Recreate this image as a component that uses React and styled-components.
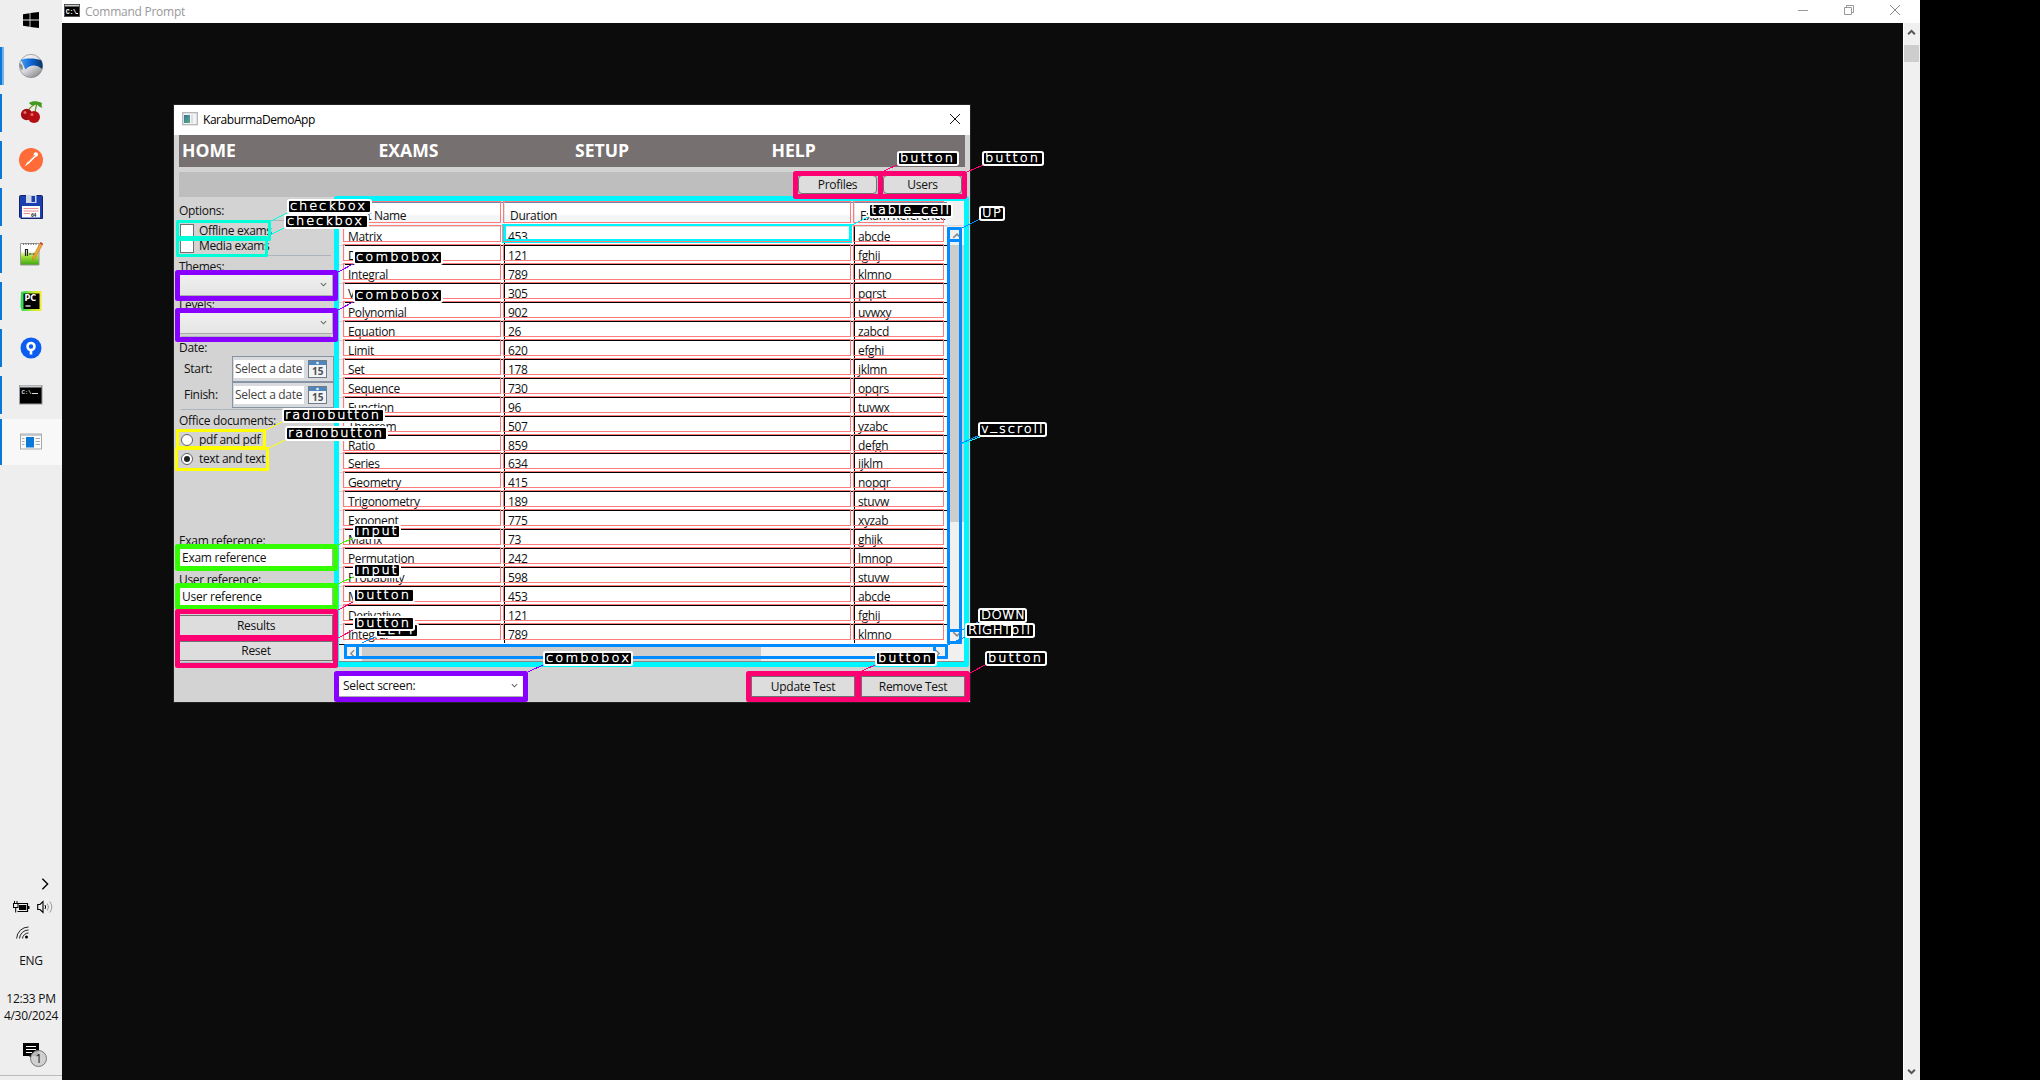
import React from "react";
import styled, { createGlobalStyle, css } from "styled-components";

const Global = createGlobalStyle`
  * { box-sizing: border-box; }
  html, body { margin: 0; background: #000; }
  body { width: 2040px; height: 1080px; overflow: hidden; font-family: "Open Sans", "Noto Sans", sans-serif; font-size: 12px; line-height: 16px; color: #111; letter-spacing: -0.3px; }
`;

const Desktop = styled.div`display: flex; position: relative; width: 1920px; height: 1080px; background: #0c0c0c;`;

/* ---------- taskbar ---------- */
const Taskbar = styled.aside`display: flex; flex-direction: column; width: 62px; height: 1080px; background: #eee; color: #111;`;
const Slots = styled.div`display: flex; flex-direction: column; gap: 9px;`;
const Slot = styled.div`
  display: flex; align-items: center; justify-content: center; height: 38px;
  ${(p) => p.$first && css`padding-top: 2px;`}
  ${(p) => p.$open && css`box-shadow: inset 2px 0 #0a78d7;`}
  ${(p) => p.$grouped && css`box-shadow: inset 2px 0 #0a78d7, inset 4px 0 #76b2e6;`}
  ${(p) => p.$active && css`margin-top: -4px; height: 46px; background: #f8f8f8; padding-bottom: 2px;`}
`;
const Tray = styled.div`display: flex; flex-direction: column; margin-top: auto; height: 205px;`;
const TrayRow = styled.div`display: flex; align-items: center; height: ${(p) => p.$h}px; padding-left: ${(p) => p.$x || 0}px; gap: ${(p) => p.$gap || 0}px;`;
const Language = styled.div`height: 49px; padding-top: 10px; text-align: center; line-height: 17px;`;
const Clock = styled.div`height: 50px; text-align: center; line-height: 17px;`;
const Bell = styled.div`padding: 3px 0 0 23px; height: 36px;`;
const TrayEdge = styled.div`height: 5px; border-top: 1px solid #bbb;`;

/* ---------- console ---------- */
const Console = styled.main`display: flex; flex-direction: column; width: 1858px;`;
const ConsoleBar = styled.header`display: flex; align-items: center; height: 23px; padding: 0 20px 3px 2px; background: #fff; color: #999;`;
const ConsoleTitle = styled.span`margin: 3px auto 0 5px; letter-spacing: -0.25px;`;
const Controls = styled.span`display: flex; gap: 36px; align-items: center;`;
const ConsoleBody = styled.div`display: flex; flex: 1;`;
const Screen = styled.div`flex: 1; padding: 82px 0 0 112px;`;
const ConsoleScroll = styled.div`display: flex; flex-direction: column; align-items: center; width: 17px; padding: 5px 1px 4px 0; background: #f0f0f0; border-left: 1px solid #fff;`;
const ConsoleThumb = styled.div`width: 15px; height: 17px; background: #cdcdcd; margin: 8px 0 auto;`;

/* ---------- application window ---------- */
const Window = styled.section`width: 796px; height: 597px; background: #d3d3d3; outline: 1px solid #222;`;
const TitleBar = styled.div`display: flex; align-items: center; height: 30px; background: #fff; padding: 0 10px 2px 8px; color: #000;`;
const WinTitle = styled.span`margin: 2px auto 0 5px; letter-spacing: -0.45px;`;
const Nav = styled.nav`display: grid; grid-template-columns: repeat(4, 196.5px); height: 32px; margin: 0 5px; padding-left: 3px; overflow: hidden; background: #767070; color: #fff; font-weight: 700; font-size: 17.6px; line-height: 31px; letter-spacing: 0;`;
const SubBar = styled.div`display: flex; justify-content: flex-end; align-items: center; gap: 6px; height: 25px; margin: 5px 5px 0; padding-right: 3px; background: #bebebe;`;
const Button = styled.button`
  width: ${(p) => p.$w}px; height: ${(p) => p.$h}px; padding: 0; margin-top: ${(p) => p.$mt || 0}px;
  border: 1px solid #707070; border-radius: ${(p) => p.$r || 0}px; background: #ddd;
  font: inherit; color: #111; letter-spacing: inherit; line-height: 18px;
`;
const Content = styled.div`display: flex; height: 470px;`;
const Sidebar = styled.div`display: flex; flex-direction: column; flex: none; width: 165px; padding: 5px 6px 0 5px;`;
const Label = styled.div`height: 16px; line-height: 18px; margin-top: ${(p) => p.$mt || 0}px; white-space: nowrap;`;
const Rule = styled.div`height: 1px; margin: ${(p) => p.$mt}px 2px 0; background: #aeb4bf;`;
const Choice = styled.label`display: flex; align-items: center; gap: 5px; height: ${(p) => p.$h}px; margin-top: ${(p) => p.$mt || 0}px; padding-left: 1px; white-space: nowrap; letter-spacing: -0.35px;`;
const Check = styled.span`width: 14px; height: 14px; background: #fff; border: 1px solid #707070;`;
const Radio = styled.span`
  display: grid; place-items: center; width: 12px; height: 12px; margin: 0 1px; border: 1px solid #606060; border-radius: 50%; background: #fff;
  &::after { content: ""; width: 6px; height: 6px; border-radius: 50%; background: ${(p) => (p.$on ? "#222" : "#fff")}; }
`;
const Combo = styled.div`
  display: flex; align-items: center; justify-content: space-between; height: 21px; width: ${(p) => p.$w || 154}px; margin-top: ${(p) => p.$mt || 0}px; padding: 0 5px 1px 4px;
  background: ${(p) => (p.$white ? "#fff" : "linear-gradient(#f0f0f0, #e5e5e5)")}; border: solid #acacac; border-width: 0 1px 1px 0;
`;
const DateRow = styled.div`display: flex; align-items: center; justify-content: space-between; height: 26px; padding: 1px 0 0 5px;`;
const DateBox = styled.div`display: flex; align-items: center; gap: 4px; width: 102px; height: 26px; padding-left: 1px; border: 1px solid #8794a6; background: #d8dade; margin-right: -1px;`;
const DateText = styled.span`width: 70px; height: 18px; padding-left: 1px; background: #fff; color: #444; line-height: 18px; white-space: nowrap;`;
const Input = styled.div`height: 18px; padding-left: 3px; background: #fff; line-height: 19px; border-right: 1px solid #abadb3; letter-spacing: -0.25px;`;

const Table = styled.div`display: flex; flex-direction: column; flex: none; width: 626px; margin: 4px 0 0; border-bottom: 1px solid #888; height: 461px; background: #f0f0f0;`;
const columns = css`display: grid; grid-template-columns: 6px 159px 350px 93px;`;
const Head = styled.div`${columns} height: 25px; padding-top: 1px; border-bottom: 1px solid #d8d8d8;`;
const HeadCell = styled.div`padding: 4px 0 0 ${(p) => (p.$first ? 3 : 5)}px; white-space: nowrap; line-height: 17px; border-top: 1px solid #6f86ab; border-left: 1px solid #dfe1e5; background: linear-gradient(#fff 50%, #f2f4f6 60%, #f5f6f8);`;
const TableBody = styled.div`display: flex; height: 418px;`;
const Rows = styled.div`flex: none; width: 608px; background: #fff;`;
const Row = styled.div`${columns} height: ${(p) => p.$h}px; letter-spacing: -0.35px;`;
const RowMark = styled.div`background: #f4f4f4; border-top: 1px solid #d5d5d5;`;
const Cell = styled.div`padding: 1px 0 0 3px; line-height: 17px; white-space: nowrap; border-top: 1px solid ${(p) => (p.$top ? "#ddd" : "#000")}; ${(p) => p.$line && css`border-left: 1px solid #000;`}`;
const VScroll = styled.div`display: flex; flex-direction: column; align-items: center; width: 18px; padding: 5px 1px 5px 3px; background: #f0f0f0;`;
const VThumb = styled.div`width: 14px; height: 277px; margin: 4px 0 auto; background: #cdcdcd; flex: none;`;
const HScroll = styled.div`display: flex; align-items: center; height: 17px; width: 608px; padding: 0 5px 0 9px; border-top: 1px solid #000;`;
const HThumb = styled.div`width: 399px; height: 16px; margin: 0 auto 0 5px; background: #cdcdcd;`;
const Footer = styled.div`display: flex; gap: 6px; padding: 9px 5px 0 165px;`;
const Spring = styled.span`flex: 1;`;

/* ---------- detection overlay ---------- */
const Overlay = styled.div`position: absolute; inset: 0;`;
const Mark = styled.div`
  position: absolute; left: ${(p) => p.$b[0]}px; top: ${(p) => p.$b[1]}px; width: ${(p) => p.$b[2] - p.$b[0]}px; height: ${(p) => p.$b[3] - p.$b[1]}px;
  border: ${(p) => p.$t}px solid ${(p) => p.$c}; border-radius: ${(p) => (p.$t > 2 ? p.$t / 2 : 0)}px;
`;
const Leaders = styled.svg`position: absolute; left: 0; top: 0;`;
const Tag = styled.div`
  position: absolute; left: ${(p) => p.$b[0]}px; top: ${(p) => p.$b[1]}px; width: ${(p) => p.$b[2]}px; height: 11px; padding-left: 1px;
  background: #000; color: #fff; box-shadow: 0 0 0 2px #fff; border-radius: 1px; white-space: nowrap;
  font: 200 13px/10px "DejaVu Sans", sans-serif; letter-spacing: ${(p) => p.$s}px; -webkit-text-stroke: 0.45px #fff;
`;
const Under = styled.span`position: relative; top: -3px;`;

const CYAN = "#00f6ff", PINK = "#ff0073", VIOLET = "#8800ff", GREEN = "#33ff00", YELLOW = "#ffff00", BLUE = "#008cff", RED = "#ff7a7a", AQUA = "#00ffd8";

const DATA = [
  ["Matrix", "453", "abcde"], ["Derivative", "121", "fghij"], ["Integral", "789", "klmno"], ["Vector", "305", "pqrst"],
  ["Polynomial", "902", "uvwxy"], ["Equation", "26", "zabcd"], ["Limit", "620", "efghi"], ["Set", "178", "jklmn"],
  ["Sequence", "730", "opqrs"], ["Function", "96", "tuvwx"], ["Theorem", "507", "yzabc"], ["Ratio", "859", "defgh"],
  ["Series", "634", "ijklm"], ["Geometry", "415", "nopqr"], ["Trigonometry", "189", "stuvw"], ["Exponent", "775", "xyzab"],
  ["Matrix", "73", "ghijk"], ["Permutation", "242", "lmnop"], ["Probability", "598", "stuvw"], ["Matrix", "453", "abcde"],
  ["Derivative", "121", "fghij"], ["Integral", "789", "klmno"],
];
const COLS = [[343, 501], [503, 851], [853, 944]];
const rowTop = (i) => 225 + 19 * i - (i > 11 ? 1 : 0);
const rowHeight = (i) => (i === 11 ? 18 : 19);

const MARKS = [
  [[334, 196, 969, 667], 5, CYAN],
  ...COLS.map(([a, b]) => [[a, 201, b, 223], 1, RED]),
  ...DATA.flatMap((_, i) => COLS.map(([a, b]) => [[a, rowTop(i), b, rowTop(i) + 17], 1, RED])),
  [[502, 224, 852, 243], 2, CYAN], [[503, 225, 851, 242], 1, RED], [[504, 224, 851, 241], 2, CYAN],
  [[947, 227, 962, 644], 3, BLUE], [[947, 227, 962, 242], 3, BLUE], [[947, 629, 962, 644], 3, BLUE],
  [[344, 644, 948, 659], 3, BLUE], [[344, 644, 359, 659], 3, BLUE], [[933, 644, 948, 659], 3, BLUE],
  [[176, 220, 271, 241], 3, AQUA], [[176, 236, 268, 257], 3, AQUA],
  [[176, 429, 266, 449], 3, YELLOW], [[175, 447, 269, 471], 3, YELLOW],
  [[175, 270, 338, 301], 5, VIOLET], [[175, 308, 338, 342], 5, VIOLET], [[334, 671, 528, 702], 5, VIOLET],
  [[175, 544, 338, 571], 5, GREEN], [[175, 583, 338, 610], 5, GREEN],
  [[175, 609, 338, 640], 5, PINK], [[175, 636, 338, 668], 5, PINK],
  [[793, 171, 883, 199], 5, PINK], [[878, 171, 967, 199], 5, PINK],
  [[746, 671, 860, 702], 5, PINK], [[856, 671, 970, 702], 5, PINK],
];
const LEADERS = [
  [271, 221, 289, 212, AQUA], [270, 235, 286, 227, AQUA], [338, 272, 355, 263, VIOLET], [338, 310, 355, 301, VIOLET],
  [266, 430, 284, 421, YELLOW], [269, 448, 287, 439, YELLOW], [338, 545, 355, 537, GREEN], [338, 584, 355, 576, GREEN],
  [338, 610, 355, 601, PINK], [338, 638, 355, 629, PINK], [362, 643, 377, 636, BLUE], [528, 672, 545, 664, VIOLET],
  [884, 171, 899, 164, PINK], [967, 172, 983, 165, PINK], [852, 225, 870, 216, CYAN], [962, 228, 980, 219, BLUE],
  [962, 444, 980, 437, CYAN], [962, 443, 980, 435, BLUE], [962, 630, 980, 621, BLUE], [948, 645, 967, 636, BLUE], [862, 671, 877, 664, PINK], [970, 673, 987, 664, PINK],
];
const TAGS = [
  ["checkbox", 289, 201, 81, 1.9], ["checkbox", 286, 216, 81, 1.9], ["combobox", 355, 252, 86, 2.2], ["combobox", 355, 290, 86, 2.2],
  ["radiobutton", 284, 410, 99, 1.8], ["radiobutton", 287, 428, 99, 1.8], ["input", 355, 526, 44, 1.8], ["input", 355, 565, 44, 1.8],
  ["button", 355, 590, 58, 2], ["LEFT", 377, 625, 40, 2], ["button", 355, 618, 58, 2], ["combobox", 545, 653, 86, 2.2],
  ["button", 899, 153, 58, 2], ["button", 984, 153, 58, 2], ["table_cell", 870, 205, 81, 1.8], ["UP", 981, 208, 22, 1.4],
  ["v_scroll", 980, 424, 65, 1.9], ["DOWN", 980, 610, 45, 0.4], ["h_scroll", 967, 625, 66, 1.9], ["RIGHT", 967, 625, 44, 0.6],
  ["button", 877, 653, 58, 2], ["button", 987, 653, 58, 2],
];

/* ---------- icons ---------- */
const Chevron = ({ d = "down", c = "#666", w = 7, s = 1.2 }) => {
  const path = { down: "M1 2.5L4 5.5L7 2.5", up: "M1 5.5L4 2.5L7 5.5", left: "M5.5 1L2.5 4L5.5 7", right: "M2.5 1L5.5 4L2.5 7" }[d];
  return <svg width={w} height={w} viewBox="0 0 8 8"><path d={path} fill="none" stroke={c} strokeWidth={s} /></svg>;
};
const Cross = ({ c, s = 10 }) => <svg width={s} height={s} viewBox="0 0 10 10"><path d="M0 0L10 10M10 0L0 10" stroke={c} strokeWidth="1" /></svg>;
const Calendar = () => (
  <svg width="19" height="18" viewBox="0 0 19 18">
    <rect x=".5" y=".5" width="18" height="17" fill="#f4f4f4" stroke="#6f7b88" />
    <rect x="1" y="1" width="17" height="4" fill="#4f86bd" /><circle cx="9.5" cy="3" r="1.3" fill="#e8f0f8" />
    <text x="9.7" y="15.2" textAnchor="middle" fontSize="10" fontWeight="700" fill="#4b525c" fontFamily="Open Sans, sans-serif" letterSpacing="0">15</text>
  </svg>
);
const I24 = ({ children }) => <svg width="24" height="24" viewBox="0 0 24 24">{children}</svg>;
const Windows = () => <svg width="16" height="16" viewBox="0 0 16 16"><path d="M0 2.2L6.6 1.2V7.5H0zM7.4 1L16 0V7.5H7.4zM0 8.4H6.6V14.7L0 13.8zM7.4 8.4H16V16L7.4 14.9z" fill="#000" /></svg>;
const Browser = () => (
  <I24><defs><linearGradient id="orb" x2=".7" y2="1"><stop offset="0" stopColor="#fff" /><stop offset=".6" stopColor="#d9d9dd" /><stop offset="1" stopColor="#8d8d92" /></linearGradient>
    <linearGradient id="sea" x2="1"><stop offset="0" stopColor="#4aa0ee" /><stop offset=".5" stopColor="#0c63d0" /><stop offset="1" stopColor="#0b3468" /></linearGradient></defs>
    <circle cx="12" cy="12" r="11.6" fill="url(#orb)" stroke="#777" strokeWidth=".6" />
    <path d="M1.500 6C7 4 16 4 22.500 6.500C23.800 10 23.800 12 23.200 15C17 10 11 10.500 6.500 15.500C5 13 4 9 1.500 6z" fill="url(#sea)" /><path d="M.5 9C3.500 10 4.500 13 3.200 16.500C1 15 .2 12 .5 9z" fill="#8b8b90" /></I24>
);
const Cherries = () => (
  <I24><path d="M18 2C12 5 9 8 8 13M18 2C17 6 16 9 16 13" fill="none" stroke="#6b8f1e" strokeWidth="1.2" /><path d="M10 2C13 -.5 18 -.5 23 2C22 5 23 6 23.500 7C21 6 19 5 17.500 3C15 5 12 5 10 2z" fill="#3f9a1f" />
    <circle cx="7.600" cy="13.500" r="5.700" fill="#a30d12" /><circle cx="15" cy="16" r="6" fill="#b50f14" /><circle cx="6" cy="11.500" r="1.500" fill="#e8676a" /><circle cx="13" cy="13.500" r="1.500" fill="#e8676a" /></I24>
);
const Postman = () => <I24><circle cx="12" cy="12" r="12" fill="#ff6c37" /><path d="M8 14.500L15.500 7L17 8.500L10 15.500z" fill="#fff" /><circle cx="16.800" cy="6.500" r="2.200" fill="#fff" /><path d="M5.500 18.500L8.500 14L10 15.500z" fill="#fff" /><path d="M9 14L16 7" stroke="#ff6c37" strokeWidth=".7" /></I24>;
const Floppy = () => (
  <I24><path d="M.5 1.500Q.5 .5 1.500 .5H22.500Q23.500 .5 23.500 1.500V23.500H2L.5 22z" fill="#1c3fb0" stroke="#16236b" /><rect x="7" y="0" width="10.500" height="8" fill="#cfd6e6" /><rect x="12.500" y="1" width="3.500" height="6" fill="#1c3fb0" />
    <rect x="3" y="11" width="18" height="11.500" fill="#fff" /><path d="M4.500 13.500H19.500M4.500 16H19.500M4.500 18.500H11" stroke="#ee8d8d" strokeWidth="1" /><text x="12" y="21.500" fontSize="5" fontWeight="700" fill="#333">64</text></I24>
);
const Notepad = () => (
  <I24><defs><linearGradient id="np" y2="1" x2="0"><stop offset=".35" stopColor="#fff" /><stop offset=".6" stopColor="#a5e03a" /><stop offset="1" stopColor="#3da512" /></linearGradient></defs>
    <path d="M1.500 1.500H20V23H1.500z" fill="url(#np)" stroke="#999" /><path d="M4 2H18" stroke="#777" strokeDasharray="1 1.500" strokeWidth="2" /><path d="M6.500 14V7.500H8.500V14M10 12H12.500M13.500 12H16" stroke="#222" strokeWidth="1.200" fill="none" />
    <path d="M21 1L23.500 2.500L16 16.500L13.500 18L13.800 15z" fill="#f0a835" stroke="#b46b16" strokeWidth=".5" /><path d="M20.800 1.400L21.500 0L24 1.500L23.300 3z" fill="#c33" /></I24>
);
const PyCharm = () => <I24><defs><linearGradient id="pc" x2="1" y2="0"><stop offset="0" stopColor="#1fd85c" /><stop offset=".6" stopColor="#c3e92c" /><stop offset="1" stopColor="#f5ee27" /></linearGradient></defs><path d="M2 3L6 2H22.500V22H3L1.500 18z" fill="url(#pc)" /><rect x="4.500" y="4.500" width="16" height="15.500" fill="#000" /><text x="5.400" y="12" fontSize="8" fontWeight="700" fill="#fff" fontFamily="DejaVu Sans" letterSpacing="0">PC</text><path d="M6.500 17H11.500" stroke="#fff" strokeWidth="1.200" /></I24>;
const Sourcetree = () => <I24><circle cx="12" cy="12" r="10.500" fill="#0b5cf0" /><circle cx="12" cy="10.500" r="3.500" fill="none" stroke="#fff" strokeWidth="2.600" /><path d="M10.700 14H13.300V18.500H10.700z" fill="#fff" /></I24>;
const Prompt = () => <I24><rect x=".5" y="2.500" width="22.500" height="18.500" fill="#000" stroke="#999" /><rect x="1" y="2.500" width="21.500" height="2" fill="#c9ced2" /><text x="2.500" y="11" fontSize="6" fontWeight="700" fill="#ddd" fontFamily="Liberation Mono">C:\</text><path d="M13 10.500H19" stroke="#ddd" /></I24>;
const SmallPrompt = () => <svg width="16" height="13" viewBox="0 0 16 13"><rect x=".5" y=".5" width="15" height="12" fill="#000" stroke="#555" /><rect x="1" y="1" width="14" height="1.500" fill="#ccc" /><text x="1.800" y="9.500" fontSize="6.500" fontWeight="700" fill="#fff" fontFamily="Liberation Mono" letterSpacing="-.3">C:\</text><path d="M12 9.500H14" stroke="#fff" /></svg>;
const AppIcon = () => <I24><rect x="1.500" y="5" width="21" height="15" fill="#fafafa" stroke="#a5a9ad" /><path d="M1.500 6H22.500" stroke="#b9bcbf" strokeWidth="1.500" /><rect x="7" y="8" width="8" height="10.500" fill="#0a78d7" /><path d="M3 9.500H5.500M3 12.500H5.500M3 15.500H5.500M16.500 9.500H21M16.500 12.500H21M16.500 15.500H21" stroke="#a5a9ad" /></I24>;
const TitleIcon = () => <svg width="16" height="14" viewBox="0 0 16 14"><defs><linearGradient id="ti" x2="1" y2="1"><stop offset="0" stopColor="#3d6fa5" /><stop offset="1" stopColor="#55b27c" /></linearGradient></defs><rect x=".7" y=".7" width="14.600" height="12" fill="#f4f4f4" stroke="#adb0b4" strokeWidth="1.200" /><rect x="2" y="3" width="6" height="8" fill="url(#ti)" /><rect x="9" y="3" width="2" height="8" fill="#dcdfe1" /></svg>;
const Battery = () => <svg width="17" height="12" viewBox="0 0 17 12"><path d="M4.500 2.500H14.500V10.500H4.500" fill="none" stroke="#000" strokeWidth="1.200" /><rect x="6" y="4" width="7.200" height="5" /><rect x="15" y="5" width="1.500" height="3" /><path d="M1.500 0V3M4 0V3M2.700 6V11.500" stroke="#000" /><rect x=".5" y="2.500" width="4.500" height="4" fill="#eee" stroke="#000" /></svg>;
const Speaker = () => <svg width="17" height="14" viewBox="0 0 17 14" fill="none" stroke="#000"><path d="M.7 4.500H3L6 1.500V12.500L3 9.500H.7z" strokeWidth="1.100" /><path d="M8 5Q9.300 7 8 9" /><path d="M10.300 3.500Q12.700 7 10.300 10.500M12.700 1.500Q17 7 12.700 12.500" stroke="#999" /></svg>;
const Wifi = () => <svg width="13" height="13" viewBox="0 0 13 13" fill="none" stroke="#222"><path d="M.6 12.500A12 12 0 0 1 12.500 1M3.500 12.500A9 9 0 0 1 12.500 4M6.500 12.500A6 6 0 0 1 12.500 7" /><circle cx="10.500" cy="11" r="1.500" fill="#000" stroke="none" /></svg>;
const Notice = () => <svg width="26" height="26" viewBox="0 0 26 26"><path d="M0 0H16V13H9L8 15L6 13H0z" /><path d="M3 3.500H13M3 6.500H13M3 9.500H9" stroke="#fff" /><circle cx="15.500" cy="15.500" r="8" fill="#ccc" fillOpacity=".9" stroke="#777" /><text x="15.500" y="20" textAnchor="middle" fontSize="12" fill="#111">1</text></svg>;

export default function App() {
  return (
    <>
      <Global />
      <Desktop>
        <Taskbar>
          <Slots>
            <Slot $first><Windows /></Slot>
            <Slot $grouped><Browser /></Slot>
            <Slot $open><Cherries /></Slot>
            <Slot $open><Postman /></Slot>
            <Slot $open><Floppy /></Slot>
            <Slot $open><Notepad /></Slot>
            <Slot $open><PyCharm /></Slot>
            <Slot $open><Sourcetree /></Slot>
            <Slot $open><Prompt /></Slot>
            <Slot $open $active><AppIcon /></Slot>
          </Slots>
          <Tray>
            <TrayRow $h={18} $x={38}><Chevron d="right" c="#000" w={14} s={0.8} /></TrayRow>
            <TrayRow $h={30} $x={13} $gap={7}><Battery /><Speaker /></TrayRow>
            <TrayRow $h={20} $x={16}><Wifi /></TrayRow>
            <Language>ENG</Language>
            <Clock>12:33 PM<br />4/30/2024</Clock>
            <Bell><Notice /></Bell>
            <TrayEdge />
          </Tray>
        </Taskbar>
        <Console>
          <ConsoleBar>
            <SmallPrompt /><ConsoleTitle>Command Prompt</ConsoleTitle>
            <Controls>
              <svg width="10" height="10"><path d="M0 5.500H10" stroke="#999" /></svg>
              <svg width="10" height="10" viewBox="0 0 10 10" fill="none" stroke="#999"><path d="M.5 2.500H7.500V9.500H.5zM2.500 2V.5H9.500V7.500H8" /></svg>
              <Cross c="#888" />
            </Controls>
          </ConsoleBar>
          <ConsoleBody>
            <Screen>
              <Window>
                <TitleBar><TitleIcon /><WinTitle>KaraburmaDemoApp</WinTitle><Cross c="#111" s={10} /></TitleBar>
                <Nav><span>HOME</span><span>EXAMS</span><span>SETUP</span><span>HELP</span></Nav>
                <SubBar><Button $w={79} $h={19} $r={4}>Profiles</Button><Button $w={79} $h={19} $r={4}>Users</Button></SubBar>
                <Content>
                  <Sidebar>
                    <Label>Options:</Label>
                    <Rule $mt={2} />
                    <Choice $h={15} $mt={2}><Check />Offline exams</Choice>
                    <Choice $h={15}><Check />Media exams</Choice>
                    <Rule $mt={2} />
                    <Label $mt={2}>Themes:</Label>
                    <Combo $mt={1}><span /><Chevron /></Combo>
                    <Label>Levels:</Label>
                    <Combo $mt={1}><span /><Chevron /></Combo>
                    <Rule $mt={2} />
                    <Label $mt={2}>Date:</Label>
                    <DateRow>Start:<DateBox><DateText>Select a date</DateText><Calendar /></DateBox></DateRow>
                    <DateRow>Finish:<DateBox><DateText>Select a date</DateText><Calendar /></DateBox></DateRow>
                    <Rule $mt={2} />
                    <Label $mt={2}>Office documents:</Label>
                    <Choice $h={19} $mt={2}><Radio />pdf and pdf</Choice>
                    <Choice $h={19}><Radio $on />text and text</Choice>
                    <Label $mt={64}>Exam reference:</Label>
                    <Input>Exam reference</Input>
                    <Label $mt={5}>User reference:</Label>
                    <Input>User reference</Input>
                    <Button $w={154} $h={21} $mt={10}>Results</Button>
                    <Button $w={154} $h={20} $mt={5}>Reset</Button>
                    <Rule $mt={1} />
                  </Sidebar>
                  <Table>
                    <Head><span /><HeadCell $first>Test Name</HeadCell><HeadCell>Duration</HeadCell><HeadCell>Exam Reference</HeadCell></Head>
                    <TableBody>
                      <Rows>
                        {DATA.map(([name, duration, ref], i) => (
                          <Row key={i} $h={rowHeight(i)}>
                            <RowMark />
                            <Cell $top={!i}>{name}</Cell>
                            <Cell $top={!i} $line>{duration}</Cell>
                            <Cell $top={!i} $line>{ref}</Cell>
                          </Row>
                        ))}
                      </Rows>
                      <VScroll><Chevron d="up" c="#888" w={10} /><VThumb /><Chevron c="#888" w={10} /></VScroll>
                    </TableBody>
                    <HScroll><Chevron d="left" c="#888" w={9} /><HThumb /><Chevron d="right" c="#888" w={9} /></HScroll>
                  </Table>
                </Content>
                <Footer>
                  <Combo $w={185} $white>Select screen:<Chevron /></Combo><Spring />
                  <Button $w={104} $h={21}>Update Test</Button><Button $w={104} $h={21}>Remove Test</Button>
                </Footer>
              </Window>
            </Screen>
            <ConsoleScroll><Chevron d="up" c="#555" w={9} s={1.8} /><ConsoleThumb /><Chevron c="#555" w={9} s={1.8} /></ConsoleScroll>
          </ConsoleBody>
        </Console>
        <Overlay>
          {MARKS.map(([b, t, c], i) => <Mark key={i} $b={b} $t={t} $c={c} />)}
          <Leaders width="1920" height="1080" shapeRendering="crispEdges">
            {LEADERS.map(([x1, y1, x2, y2, c], i) => <line key={i} x1={x1} y1={y1} x2={x2} y2={y2} stroke={c} />)}
          </Leaders>
          {TAGS.map(([text, x, y, w, s], i) => (
            <Tag key={i} $b={[x, y, w]} $s={s}>
              {text.split(/(_)/).map((part, k) => (part === "_" ? <Under key={k}>_</Under> : part))}
            </Tag>
          ))}
        </Overlay>
      </Desktop>
    </>
  );
}
